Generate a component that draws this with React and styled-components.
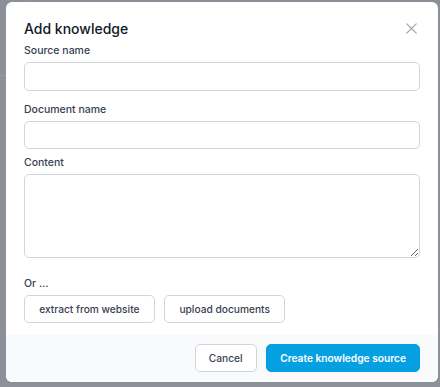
import React from "react";
import styled, { createGlobalStyle } from "styled-components";

const Global = createGlobalStyle`
  html, body { margin: 0; padding: 0; }
  body {
    background: #8e9099;
    font-family: Inter, "Noto Sans", sans-serif;
    -webkit-font-smoothing: antialiased;
  }
  * { box-sizing: border-box; }
`;

const Overlay = styled.div`
  width: 440px;
  height: 387px;
  padding: 2px 2px 0 6px;
  overflow: hidden;
  background:
    linear-gradient(#979aa2, #979aa2) 25px 0 / 1px 2px no-repeat,
    linear-gradient(#979aa2, #979aa2) 0 75px / 6px 1px no-repeat,
    #8e9099;
`;

const Modal = styled.div`
  width: 432px;
  height: 380px;
  background: #ffffff;
  border-radius: 6px;
  overflow: hidden;
  display: flex;
  flex-direction: column;
`;

const Body = styled.div`
  flex: 1;
  padding: 16.5px 18px 0 18px;
  display: flex;
  flex-direction: column;
`;

const Header = styled.div`
  display: flex;
  align-items: center;
  justify-content: space-between;
  height: 20px;
  margin-bottom: 5.5px;
`;

const Title = styled.h2`
  margin: 0;
  font-size: 14px;
  line-height: 20px;
  font-weight: 500;
  color: #111827;
`;

const Close = styled.button`
  border: 0;
  background: none;
  padding: 0;
  margin-right: 3.5px;
  width: 11px;
  height: 11px;
  display: flex;
  color: #9ca3af;
  cursor: pointer;
`;

const Field = styled.div`
  display: flex;
  flex-direction: column;
  gap: ${(p) => p.$gap || 4}px;
  margin-bottom: ${(p) => p.$mb || 0}px;
`;

const Label = styled.label`
  font-size: 10.5px;
  font-weight: 500;
  color: #374151;
  line-height: 14px;
`;

const Input = styled.input`
  width: 100%;
  height: 28.5px;
  border: 1px solid #d1d5db;
  border-radius: 5px;
  background: #fff;
  font: inherit;
  padding: 0 10px;
  display: block;
`;

const TextArea = styled.textarea`
  width: 100%;
  height: 83.5px;
  border: 1px solid #d1d5db;
  border-radius: 5px;
  background: #fff;
  font: inherit;
  padding: 8px 10px;
  display: block;
  resize: vertical;
`;

const ButtonRow = styled.div`
  display: flex;
  gap: 9.5px;
  justify-content: ${(p) => (p.$end ? "flex-end" : "flex-start")};
`;

const Button = styled.button`
  height: 28px;
  padding: 0 ${(p) => p.$px || 13}px;
  border-radius: 5px;
  font-family: inherit;
  font-size: 10.2px;
  font-weight: ${(p) => (p.$primary ? 600 : 500)};
  border: 1px solid ${(p) => (p.$primary ? "#04a0e2" : "#d1d5db")};
  background: ${(p) => (p.$primary ? "#04a0e2" : "#ffffff")};
  color: ${(p) => (p.$primary ? "#ffffff" : "#374151")};
  cursor: pointer;
`;

const Footer = styled.div`
  height: 47px;
  background: #f9fafb;
  padding: 9px 18px 0 0;
`;

export default function App() {
  return (
    <>
      <Global />
      <Overlay>
        <Modal>
          <Body>
            <Header>
              <Title>Add knowledge</Title>
              <Close aria-label="Close">
                <svg width="11" height="11" viewBox="0 0 11 11" fill="none" stroke="currentColor" strokeWidth="1.2" strokeLinecap="round">
                  <path d="M0.8 0.8L10.2 10.2M10.2 0.8L0.8 10.2" />
                </svg>
              </Close>
            </Header>
            <Field $mb={12}>
              <Label>Source name</Label>
              <Input />
            </Field>
            <Field $mb={7}>
              <Label>Document name</Label>
              <Input />
            </Field>
            <Field $mb={19}>
              <Label>Content</Label>
              <TextArea />
            </Field>
            <Field $gap={4}>
              <Label>Or ...</Label>
              <ButtonRow>
                <Button $px={14.2}>extract from website</Button>
                <Button $px={14.2}>upload documents</Button>
              </ButtonRow>
            </Field>
          </Body>
          <Footer>
            <ButtonRow $end>
              <Button>Cancel</Button>
              <Button $primary>Create knowledge source</Button>
            </ButtonRow>
          </Footer>
        </Modal>
      </Overlay>
    </>
  );
}
